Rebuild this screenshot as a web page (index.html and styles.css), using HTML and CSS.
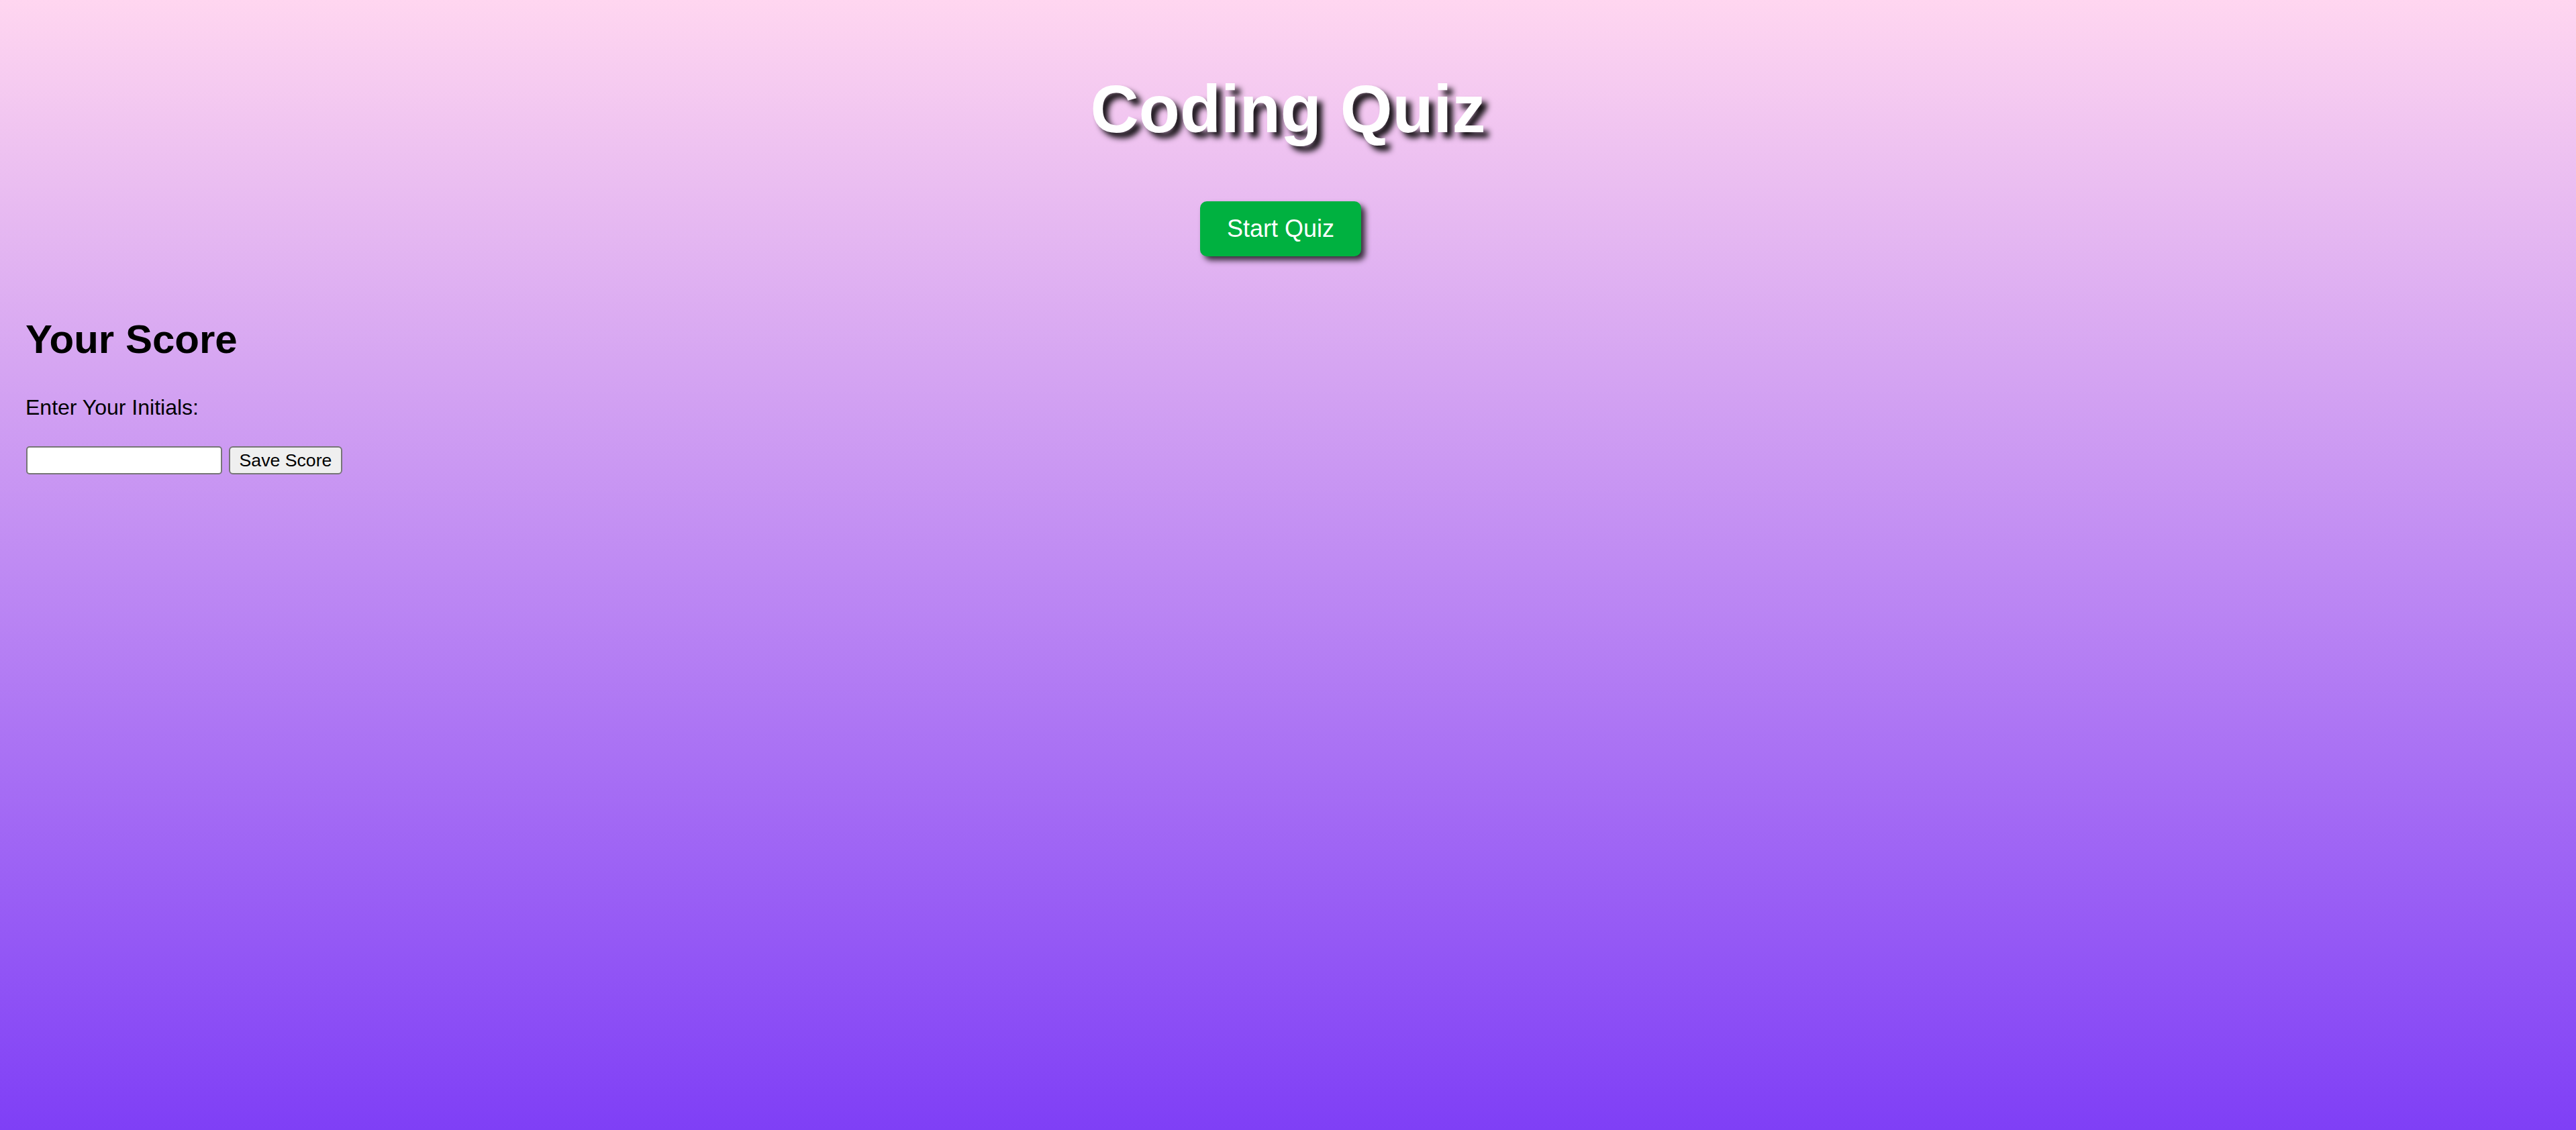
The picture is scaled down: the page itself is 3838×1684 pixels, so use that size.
FILE: index.html
```html
<!DOCTYPE html>
<html lang="en">
<head>
<meta charset="utf-8">
<title>Coding Quiz</title>
<link rel="stylesheet" href="styles.css">
</head>
<body>
<header class="header">
  <h1 class="title">Coding Quiz</h1>
  <button class="start-btn" type="button">Start Quiz</button>
</header>
<section class="score">
  <h2 class="score-title">Your Score</h2>
  <p class="score-label">Enter Your Initials:</p>
  <div class="score-form">
    <input class="score-input" type="text">
    <button class="save-btn" type="button">Save Score</button>
  </div>
</section>
</body>
</html>
```
FILE: styles.css
```css
html, body {
  margin: 0;
  padding: 0;
}
body {
  min-height: 100vh;
  box-sizing: border-box;
  padding: 0 38px;
  background: linear-gradient(to bottom, #ffd6f0 0%, #7f3ff6 100%);
  font-family: "Liberation Sans", Arial, sans-serif;
  color: #000;
}
.header {
  display: flex;
  flex-direction: column;
  align-items: center;
}
.title {
  margin: 106px 0 0;
  font-size: 100px;
  line-height: 112px;
  font-weight: 700;
  color: #fff;
  text-shadow: 8px 8px 9px rgba(0, 0, 0, 0.92);
}
.start-btn {
  margin: 82px 22px 0 0;
  padding: 20px 40px;
  height: 82px;
  box-sizing: border-box;
  font-family: "Liberation Sans", Arial, sans-serif;
  font-size: 36px;
  line-height: 42px;
  color: #fff;
  background: #00b140;
  border: none;
  border-radius: 10px;
  box-shadow: 6px 6px 9px rgba(0, 0, 0, 0.75);
}
.score-title {
  margin: 89px 0 0;
  font-size: 60px;
  line-height: 69px;
  font-weight: 700;
}
.score-label {
  margin: 49px 0 0;
  font-size: 32px;
  line-height: 37px;
}
.score-form {
  display: flex;
  gap: 10px;
  margin-top: 39px;
  padding-left: 1px;
}
.score-input {
  width: 292px;
  height: 42px;
  box-sizing: border-box;
  margin: 0;
  border: 2px solid #767676;
  border-radius: 5px;
  background: #fff;
  font-size: 26px;
}
.save-btn {
  width: 169px;
  height: 42px;
  box-sizing: border-box;
  margin: 0;
  padding: 0;
  font-family: "Liberation Sans", Arial, sans-serif;
  font-size: 26.67px;
  color: #000;
  background: #efefef;
  border: 2px solid #767676;
  border-radius: 6px;
}
```
